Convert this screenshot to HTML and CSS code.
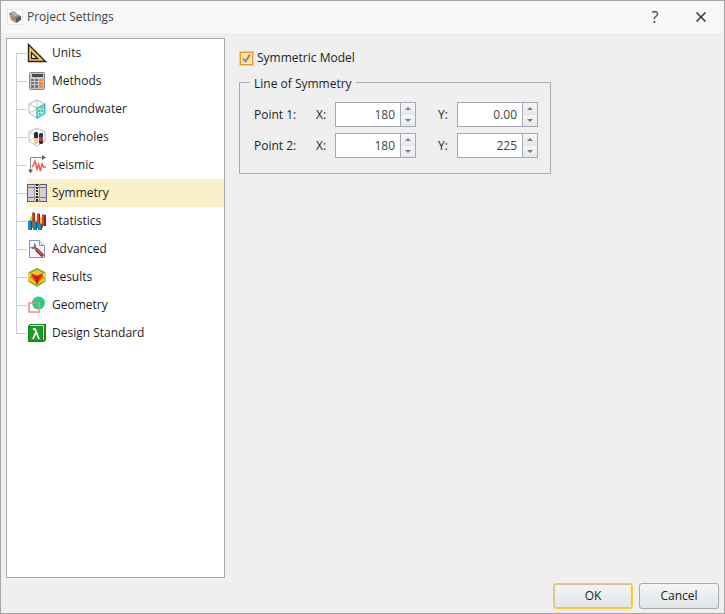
FILE: index.html
```html
<!DOCTYPE html>
<html lang="en">
  <head>
    <meta charset="UTF-8" />
    <meta name="viewport" content="width=device-width, initial-scale=1.0" />
    <title>Project Settings</title>
    <link rel="stylesheet" href="styles.css">
  </head>
  <body>
    <div class="dialog">
      <header class="titlebar">
        <svg class="app-icon" viewBox="0 0 16 16">
          <rect x="0.5" y="0.5" width="15" height="15" fill="#fff" stroke="#e4e4e4" />
          <path d="M2 4l5-2 3 3 4 2v4l-5 3-5-3z" fill="#8b8b8b" />
          <path d="M4 3l3-1 4 4-4 2z" fill="#b0b0b0" />
          <path d="M9 9l5-2v4l-5 3z" fill="#5c5c5c" />
          <path d="M2 5c3 0 3 6 6 8" fill="none" stroke="#e58a5c" stroke-width="1.3" />
        </svg>
        <h1>Project Settings</h1>
        <button class="title-button" type="button" aria-label="Help">?</button>
        <button class="title-button" type="button" aria-label="Close">
          <svg width="12" height="12" viewBox="0 0 12 12">
            <path d="M1.5 1.5l9 9M10.5 1.5l-9 9" stroke="#333" stroke-width="1.5" />
          </svg>
        </button>
      </header>

      <main class="content">
        <nav class="tree">
          <ul>
            <li><a href="#units">
              <svg class="icon" viewBox="0 0 20 20">
                <path d="M1.5 1.5V18.5H18.5z" fill="#f6c766" stroke="#2b2416" stroke-width="1.4" />
                <path d="M4.500 9.500V15.500H10.500z" fill="#fff" stroke="#2b2416" stroke-width="1.3" />
                <path d="M4.500 6l1.500-1M7 8.500l1.500-1M9.500 11l1.500-1M12 13.500l1.500-1M14.500 16l1.500-1" stroke="#6a4c1b" />
              </svg>Units</a></li>
            <li><a href="#methods">
              <svg class="icon" viewBox="0 0 20 20">
                <rect x="2.5" y="1.5" width="15" height="17" rx="1" fill="#c9c9c9" stroke="#858585" />
                <rect x="5" y="3" width="11" height="3" fill="#4d4d4d" />
                <path d="M4 8h3v2h-3zM8 8h3v2h-3zM4 11h3v2h-3zM8 11h3v2h-3zM4 14h3v3h-3zM8 14h3v3h-3z" fill="#777" />
                <path d="M12 8h4v2h-4zM12 11h4v6h-4z" fill="#f08a4b" />
              </svg>Methods</a></li>
            <li><a href="#groundwater">
              <svg class="icon" viewBox="0 0 20 20">
                <path d="M10 1l8 4v9l-8 5-8-5V5z" fill="#fff" stroke="#b4b4b4" />
                <path d="M2 5l8 4 8-4M10 1v8M2 14l8-4" fill="none" stroke="#c2c2c2" />
                <path d="M10 9.500l7.500-4v9l-7.500 4.500z" fill="#b4f1eb" stroke="#26c4bd" stroke-width="1.4" />
                <path d="M11.500 12.500l2-1.500M14 9.500l2-1M12 15.500l1.500-1M14.500 12.500l1.500-1" stroke="#2b8a90" stroke-width="1.3" />
              </svg>Groundwater</a></li>
            <li><a href="#boreholes">
              <svg class="icon" viewBox="0 0 20 20">
                <path d="M10 1l8 4v9l-8 5-8-5V5z" fill="#fff" stroke="#bbb" />
                <path d="M2 5l8 4 8-4M10 1v8M2 14l8-5 8 5" fill="none" stroke="#ccc" />
                <path d="M7 6l1-1h2l1 1v5H7z" fill="#33233f" />
                <path d="M7 11h4v2H7z" fill="#f1c5b4" />
                <path d="M7 13h4v3l-1 1H8l-1-1z" fill="#f0cf94" />
                <path d="M12 7l1-1h2l1 1v4h-4z" fill="#263858" />
                <path d="M12 10h4v4h-4z" fill="#d83440" />
                <path d="M12 14h4v2l-1 1h-2l-1-1z" fill="#4a2335" />
              </svg>Boreholes</a></li>
            <li><a href="#seismic">
              <svg class="icon" viewBox="0 0 20 20">
                <path d="M3.5 16V2.500H16" fill="none" stroke="#8b8b8b" />
                <path d="M15 0l4 2.500-4 2.500zM1 14.500h5l-2.500 4z" fill="#666" />
                <path d="M5 12l1.500-2L8 6l2 8 1.500-5 2 7 1.500-7 1.500 3H19" fill="none" stroke="#ef5a50" stroke-width="1.5" />
              </svg>Seismic</a></li>
            <li class="selected"><a href="#symmetry">
              <svg class="icon" viewBox="0 0 20 20">
                <rect x="0.5" y="1.5" width="19" height="17" fill="#d6d1d9" stroke="#5d5974" />
                <path d="M8 2h4v16h-4z" fill="#e6dfc9" />
                <path d="M0 4.500h20M0 14.500h20" stroke="#77738d" />
                <path d="M7.500 1v18M12.500 1v18" stroke="#9b97a8" />
                <path d="M10 1v18" stroke="#292525" stroke-width="2" stroke-dasharray="2 1" />
              </svg>Symmetry</a></li>
            <li><a href="#statistics">
              <svg class="icon" viewBox="0 0 20 20">
                <path d="M5 2l1-1 2 1v12H5zM10 3l1-1 2 1v11h-3zM15 4l1-1 2 1v11h-3z" fill="#d9402c" />
                <path d="M7 2h1v12H7zM12 3h1v11h-1zM17 4h2v11h-2z" fill="#8a211b" />
                <path d="M3 6l1-1 2 1v11H3zM8 9l1-1 2 1v8H8zM13 7l1-1 2 1v10h-3z" fill="#ffc229" />
                <path d="M5 6h1v11H5zM10 9h1v8h-1zM15 7h1v10h-1z" fill="#a65f12" />
                <path d="M1 10l2-1 2 1v9H1zM6 11l2-1 2 1v8H6zM11 13l2-1 2 1v6h-4z" fill="#168bd3" />
                <path d="M4 10h1v9H4zM9 11h1v8H9zM14 13h1v6h-1z" fill="#0b4c82" />
              </svg>Statistics</a></li>
            <li><a href="#advanced">
              <svg class="icon" viewBox="0 0 20 20">
                <path d="M2.500 1.500h10l5 5v12h-15z" fill="#f5f9ff" stroke="#8395b0" />
                <path d="M12.500 1.500v5h5" fill="#d7e1ef" stroke="#8395b0" />
                <path d="M3 8l2 2h3l2 2 1-2-2-2V6L7 4v3l-1 1z" fill="#707780" />
                <path d="M10 11l5 5" stroke="#911d28" stroke-width="3.500" stroke-linecap="round" />
                <path d="M10 10.500l5 5" stroke="#e44c52" stroke-width="1.800" stroke-linecap="round" />
              </svg>Advanced</a></li>
            <li><a href="#results">
              <svg class="icon" viewBox="0 0 20 20">
                <path d="M10 1l8.500 4.500v9L10 19.500l-8.500-5v-9z" fill="#f26a1c" />
                <path d="M10 1l8.500 4.500-3 1L10 3.500l-5.500 3-3-1z" fill="#5cc332" />
                <path d="M10 3l6 3-6 2.500L4 6z" fill="#f6c91d" />
                <path d="M1.500 5.500L5 7l-3.500 6zM18.500 5.500L15 7l3.500 6z" fill="#f6dc1d" />
                <path d="M1.500 12l3-1 5.500 6v2.500l-8.500-5zM18.500 12l-3-1-5.500 6v2.500l8.500-5z" fill="#e5d21c" />
                <path d="M1.500 13.500l8.500 4.500 8.500-4.500v1L10 19.500l-8.500-5z" fill="#4caf35" />
                <path d="M4 6.500L10 9l6-2.500L10 17z" fill="#dd2116" />
                <path d="M10 9v8" stroke="#9b1a0e" />
              </svg>Results</a></li>
            <li><a href="#geometry">
              <svg class="icon" viewBox="0 0 20 20">
                <circle cx="11.500" cy="8" r="6.500" fill="#23d184" />
                <rect x="2" y="8" width="10" height="9" fill="none" stroke="#f18b82" stroke-width="1.500" />
              </svg>Geometry</a></li>
            <li><a href="#design-standard">
              <svg class="icon" viewBox="0 0 20 20">
                <path d="M1 3l2-2h16v16l-2 2H1z" fill="#16851c" />
                <path d="M2 4h13v14H2z" fill="#209c25" />
                <path d="M3 2.500h13.500V17" fill="none" stroke="#e3f4dc" />
                <path d="M6 6h2l4 10M9 9l-3 7" fill="none" stroke="#fff" stroke-width="1.800" />
              </svg>Design Standard</a></li>
          </ul>
        </nav>

        <section class="settings">
          <label class="check">
            <input type="checkbox" checked />
            Symmetric Model
          </label>

          <fieldset class="group">
            <legend>Line of Symmetry</legend>
            <div class="point">
              <span class="point-name">Point 1:</span>
              <label for="x1">X:</label>
              <div class="spinner">
                <input type="text" id="x1" value="180" />
                <div class="steps">
                  <button class="up" type="button" aria-label="Increase X 1"></button>
                  <button class="down" type="button" aria-label="Decrease X 1"></button>
                </div>
              </div>
              <label for="y1">Y:</label>
              <div class="spinner">
                <input type="text" id="y1" value="0.00" />
                <div class="steps">
                  <button class="up" type="button" aria-label="Increase Y 1"></button>
                  <button class="down" type="button" aria-label="Decrease Y 1"></button>
                </div>
              </div>
            </div>
            <div class="point">
              <span class="point-name">Point 2:</span>
              <label for="x2">X:</label>
              <div class="spinner">
                <input type="text" id="x2" value="180" />
                <div class="steps">
                  <button class="up" type="button" aria-label="Increase X 2"></button>
                  <button class="down" type="button" aria-label="Decrease X 2"></button>
                </div>
              </div>
              <label for="y2">Y:</label>
              <div class="spinner">
                <input type="text" id="y2" value="225" />
                <div class="steps">
                  <button class="up" type="button" aria-label="Increase Y 2"></button>
                  <button class="down" type="button" aria-label="Decrease Y 2"></button>
                </div>
              </div>
            </div>
          </fieldset>
        </section>
      </main>

      <footer class="actions">
        <button class="button default" type="button">OK</button>
        <button class="button" type="button">Cancel</button>
      </footer>
    </div>
  </body>
</html>
```
FILE: styles.css
```css
* {
  box-sizing: border-box;
}
body {
  margin: 0;
  font-family: "Segoe UI", "Open Sans", "Noto Sans", sans-serif;
  font-size: 12px;
  line-height: 16px;
  color: #1e1e1e;
}
button,
input {
  font: inherit;
  color: inherit;
}
.dialog {
  display: flex;
  flex-direction: column;
  min-height: 100vh;
  background: #efefef;
  border: 1px solid #a5a5a5;
}
.titlebar {
  display: flex;
  align-items: center;
  height: 32px;
  padding-left: 6px;
  background: #f7f7f7;
}
.app-icon {
  width: 16px;
  height: 16px;
}
h1 {
  flex: 1;
  margin: 0 0 0 4px;
  font-size: 12px;
  font-weight: normal;
  color: #444;
}
.title-button {
  display: flex;
  align-items: center;
  justify-content: center;
  width: 46px;
  height: 32px;
  padding: 0;
  border: none;
  background: none;
  font-size: 16px;
  color: #444;
}
.content {
  flex: 1;
  display: flex;
  gap: 14px;
  padding: 5px;
}

/* category tree */
.tree {
  width: 219px;
  background: #fff;
  border: 1px solid #a3a9b5;
}
.tree ul {
  list-style: none;
  margin: 0;
  padding: 0 0 0 9px;
}
.tree li {
  display: flex;
  height: 28px;
  background: linear-gradient(#c8ced8, #c8ced8) 0 0 / 1px 100% no-repeat;
}
.tree li:first-child {
  background-position: 0 14px;
}
.tree li:last-child {
  background-size: 1px 14px;
}
.tree li::before {
  content: "";
  width: 11px;
  height: 1px;
  margin-top: 14px;
  background: #c8ced8;
}
.tree a {
  flex: 1;
  display: flex;
  align-items: center;
  gap: 5px;
  color: #1e1e1e;
  text-decoration: none;
}
.tree .selected a {
  background: #fbf1c9;
}
.icon {
  width: 20px;
  height: 20px;
}

/* symmetry page */
.settings {
  flex: 1;
  padding-top: 12px;
}
.check {
  display: flex;
  align-items: center;
  gap: 3px;
}
.check input {
  appearance: none;
  width: 15px;
  height: 15px;
  margin: 0;
  border: 1px solid #fbd746;
  box-shadow: inset 0 0 0 1px #e09a2c, inset 0 0 0 2px #fdf0c0;
  background: #fbe09a url("data:image/svg+xml,%3Csvg xmlns='http://www.w3.org/2000/svg' viewBox='0 0 13 13'%3E%3Cpath d='M3 6.5l2.5 3 4.5-7' fill='none' stroke='%23808590' stroke-width='1.8'/%3E%3C/svg%3E") center / 13px no-repeat;
}
.group {
  width: 312px;
  margin: 6px 0 0;
  padding: 10px 12px 15px 14px;
  border: 1px solid #adadad;
}
.group legend {
  margin-left: -4px;
  padding: 4px 4px 0;
}
.point {
  display: grid;
  grid-template-columns: 62px 19px 81px 22px 19px 81px;
  align-items: center;
}
.point + .point {
  margin-top: 6px;
}
.point label[for^="y"] {
  grid-column: 5;
}
.spinner {
  display: flex;
  height: 25px;
  border: 1px solid #a3a9b5;
  background: #fff;
}
.spinner input {
  flex: 1;
  min-width: 0;
  padding: 0 5px;
  border: none;
  outline: none;
  background: none;
  text-align: right;
  color: #444;
}
.steps {
  display: flex;
  flex-direction: column;
  width: 15px;
  border-left: 1px solid #a3a9b5;
}
.steps button {
  flex: 1;
  display: flex;
  align-items: center;
  justify-content: center;
  padding: 0;
  border: none;
  background: linear-gradient(#f5f6f7, #e6e8ea);
}
.steps button::before {
  content: "";
  border: 3px solid transparent;
}
.steps .up::before {
  border-top: none;
  border-bottom-color: #777c88;
}
.steps .down::before {
  border-bottom: none;
  border-top-color: #777c88;
}

/* bottom buttons */
.actions {
  display: flex;
  justify-content: flex-end;
  gap: 6px;
  padding: 0 5px 4px;
}
.button {
  width: 80px;
  height: 26px;
  padding: 0;
  border: 1px solid #a3a9b5;
  border-radius: 3px;
  background: linear-gradient(#f4f5f6, #e1e4e7);
}
.button.default {
  border-color: #fbce2e;
  box-shadow: inset 0 0 0 1px #d9c68a;
}
```
